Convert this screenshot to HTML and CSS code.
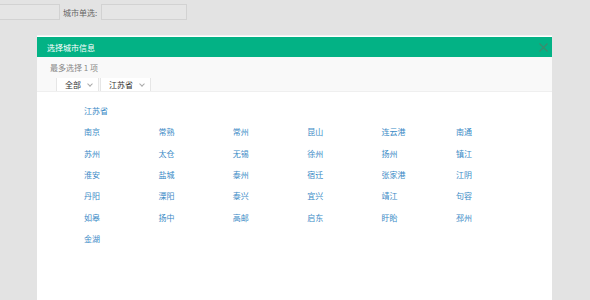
FILE: index.html
```html
<!DOCTYPE html>
<html lang="zh-CN">
  <head>
    <meta charset="UTF-8" />
    <meta name="viewport" content="width=device-width, initial-scale=1.0" />
    <title>城市单选</title>
    <link rel="stylesheet" href="styles.css">
  </head>
  <body>
    <div class="toolbar">
      <input type="text" class="field first" />
      <label class="label">城市单选:</label>
      <input type="text" class="field" />
    </div>

    <div class="dialog">
      <div class="dialog-head">
        <span class="dialog-title">选择城市信息</span>
        <span class="close">
          <svg width="9" height="9" viewBox="0 0 9 9">
            <path d="M0.5 0.5 L8.5 8.5 M8.5 0.5 L0.5 8.5" stroke="#3f8a6c" stroke-width="1.1" fill="none" />
          </svg>
        </span>
      </div>
      <div class="dialog-bar">
        <p class="hint">最多选择 1 项</p>
        <div class="tabs">
          <div class="tab">全部 <i class="arrow"></i></div>
          <div class="tab">江苏省 <i class="arrow"></i></div>
        </div>
      </div>
      <div class="dialog-body">
        <div class="province">江苏省</div>
        <ul class="cities">
          <li>南京</li>
          <li>常熟</li>
          <li>常州</li>
          <li>昆山</li>
          <li>连云港</li>
          <li>南通</li>
          <li>苏州</li>
          <li>太仓</li>
          <li>无锡</li>
          <li>徐州</li>
          <li>扬州</li>
          <li>镇江</li>
          <li>淮安</li>
          <li>盐城</li>
          <li>泰州</li>
          <li>宿迁</li>
          <li>张家港</li>
          <li>江阴</li>
          <li>丹阳</li>
          <li>溧阳</li>
          <li>泰兴</li>
          <li>宜兴</li>
          <li>靖江</li>
          <li>句容</li>
          <li>如皋</li>
          <li>扬中</li>
          <li>高邮</li>
          <li>启东</li>
          <li>盱眙</li>
          <li>邳州</li>
          <li>金湖</li>
        </ul>
      </div>
    </div>
  </body>
</html>
```

FILE: styles.css
```css
* {
  margin: 0;
  padding: 0;
  box-sizing: border-box;
  font-family: "Noto Sans CJK SC", "Liberation Sans", sans-serif;
}

html,
body {
  background: #e3e3e3;
  height: 100%;
  overflow: hidden;
}

.toolbar {
  display: flex;
  align-items: center;
  padding-top: 4px;
  height: 20px;
}

.field {
  width: 86px;
  height: 16px;
  border: 1px solid #d2d2d2;
  background: #e5e5e5;
  outline: none;
}

.field.first {
  margin-left: -26px;
}

.label {
  margin: 0 4px 0 3px;
  font-size: 8px;
  color: #666;
}

.dialog {
  position: absolute;
  left: 37px;
  top: 35px;
  bottom: 0;
  width: 515px;
  background: #fff;
  border-top: 1px solid #f3f3f3;
  overflow: hidden;
}

.dialog-head {
  display: flex;
  align-items: center;
  justify-content: space-between;
  height: 20px;
  margin-top: 1px;
  padding: 0 4px 0 10px;
  background: #03b285;
}

.dialog-title {
  color: #fff;
  font-size: 8px;
}

.close {
  display: flex;
  width: 9px;
  height: 9px;
}

.dialog-bar {
  background: #f9f9f9;
  border-bottom: 1px solid #efefef;
  height: 35px;
  padding: 5px 0 0 13px;
}

.hint {
  font-size: 8px;
  color: #888;
  line-height: 12px;
}

.tabs {
  display: flex;
  gap: 1px;
  margin: 4px 0 0 6px;
}

.tab {
  display: flex;
  align-items: center;
  height: 13px;
  padding: 0 6px 0 8px;
  gap: 5px;
  font-size: 8px;
  color: #333;
  background: #fff;
  border-left: 1px solid #e6e6e6;
  border-right: 1px solid #e6e6e6;
}

.arrow {
  width: 4px;
  height: 4px;
  margin: -2px 0 0 2px;
  border-right: 1px solid #aaa;
  border-bottom: 1px solid #aaa;
  transform: rotate(45deg);
}

.dialog-body {
  padding: 9px 0 0 47px;
}

.province {
  font-size: 8px;
  color: #3a8ac6;
  line-height: 20px;
}

.cities {
  list-style: none;
  display: grid;
  grid-template-columns: repeat(6, 74.4px);
  grid-auto-rows: 21.4px;
  align-items: center;
}

.cities li {
  font-size: 8px;
  color: #3a8ac6;
}
```
